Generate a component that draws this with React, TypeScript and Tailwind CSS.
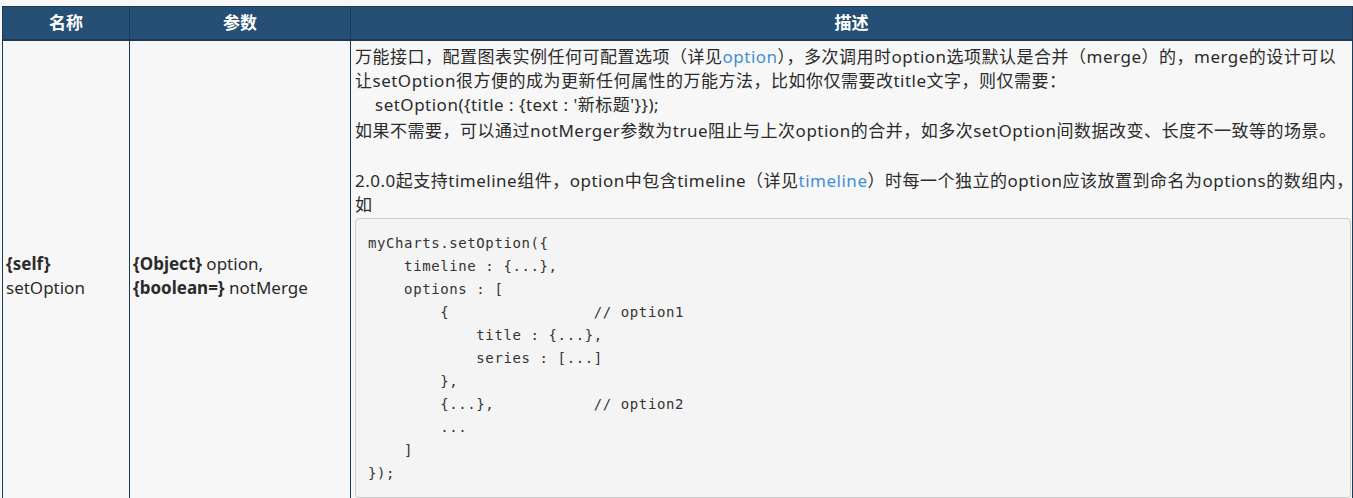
const codeLines = [
  "myCharts.setOption({",
  "    timeline : {...},",
  "    options : [",
  "        {                // option1",
  "            title : {...},",
  "            series : [...]",
  "        },",
  "        {...},           // option2",
  "        ...",
  "    ]",
  "});",
];

function Link({ children }: { children: string }) {
  return <span className="text-[#3f8fd6]">{children}</span>;
}

export default function App() {
  return (
    <div className="w-full h-[498px] overflow-hidden bg-[#f7f7f7] pt-[6px] pl-[2px] text-[#2b2b2b] font-['Noto_Sans','Noto_Sans_CJK_SC',sans-serif] text-[17px] leading-[24px]">
      <table className="w-[1351px] border-collapse table-fixed">
        <colgroup>
          <col className="w-[127px]" />
          <col className="w-[221px]" />
          <col />
        </colgroup>
        <thead>
          <tr className="bg-[#254f74] text-white font-bold h-[33px]">
            <th className="border border-[#1b3a58] border-b-2 text-center">名称</th>
            <th className="border border-[#1b3a58] border-b-2 text-center">参数</th>
            <th className="border border-[#1b3a58] border-b-2 text-center">描述</th>
          </tr>
        </thead>
        <tbody>
          <tr>
            <td className="border border-[#1b3a58] align-middle px-[3px]">
              <div className="font-bold">{"{self}"}</div>
              <div>setOption</div>
            </td>
            <td className="border border-[#1b3a58] align-middle px-[3px]">
              <div>
                <b>{"{Object}"}</b> option,
              </div>
              <div>
                <b>{"{boolean=}"}</b> notMerge
              </div>
            </td>
            <td className="border border-[#1b3a58] align-top pl-[4px] pr-[1px] pt-[4px] pb-[14px]">
              <div className="tracking-[0.5px]">
                <div className="whitespace-nowrap">
                  万能接口，配置图表实例任何可配置选项（详见<Link>option</Link>），多次调用时option选项默认是合并（merge）的，merge的设计可以
                </div>
                <div className="whitespace-nowrap">
                  让setOption很方便的成为更新任何属性的万能方法，比如你仅需要改title文字，则仅需要：
                </div>
                <div className="whitespace-nowrap pl-[20px] h-[26px]">
                  setOption({"{title : {text : '新标题'}}"});
                </div>
                <div className="whitespace-nowrap">
                  如果不需要，可以通过notMerger参数为true阻止与上次option的合并，如多次setOption间数据改变、长度不一致等的场景。
                </div>
                <div className="h-[26px]" />
                <div className="whitespace-nowrap">
                  2.0.0起支持timeline组件，option中包含timeline（详见<Link>timeline</Link>）时每一个独立的option应该放置到命名为options的数组内，
                </div>
                <div>如</div>
              </div>
              <pre className="mt-[1px] bg-[#f4f4f4] border border-[#cccccc] rounded-[4px] px-[12px] pt-[13px] pb-[12px] font-['DejaVu_Sans_Mono',monospace] text-[14px] tracking-[0.6px] leading-[23px] text-[#333]">
                {codeLines.join("\n")}
              </pre>
            </td>
          </tr>
        </tbody>
      </table>
    </div>
  );
}
